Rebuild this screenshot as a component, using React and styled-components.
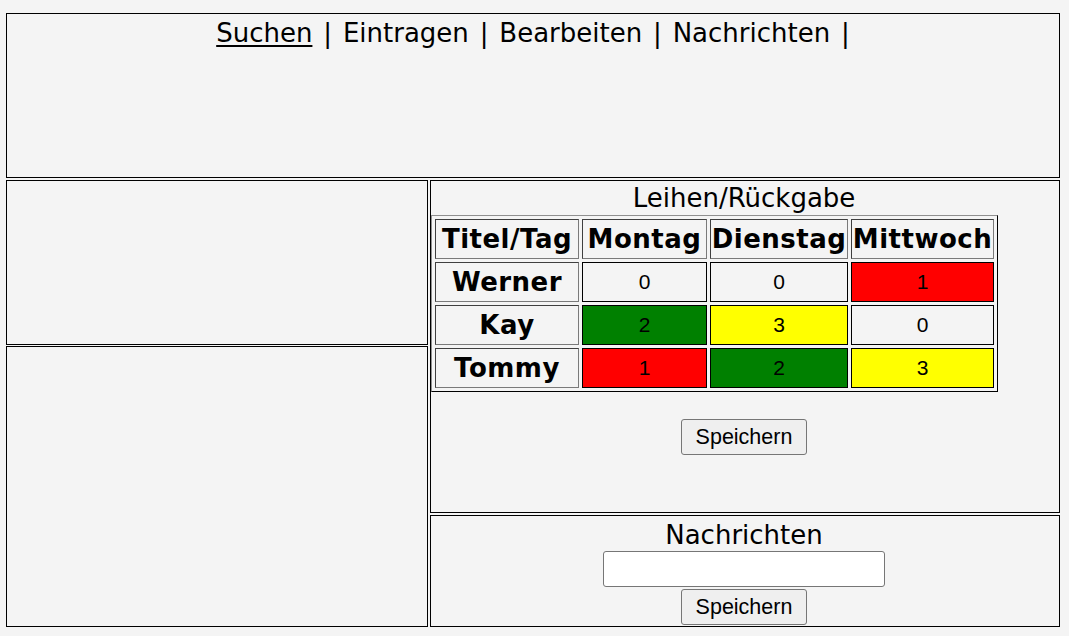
import React from 'react'
import styled, { createGlobalStyle } from 'styled-components'

const GlobalStyle = createGlobalStyle`
  body {
    margin: 0;
    background: #f4f4f4;
    font-family: "DejaVu Sans", Verdana, sans-serif;
    color: #000;
  }
`;

const Page = styled.div`
  padding: 13px 0 0 6px;
  width: 1054px;
`;

const Cell = styled.div`
  box-sizing: border-box;
  border: 1px solid #000;
  height: ${(props) => props.h}px;
  text-align: center;
  padding: ${(props) => props.pad || '0'};
`;

const Nav = styled.div`
  font-size: 26px;
  line-height: 30px;
  word-spacing: 2.6px;
`;

const NavLink = styled.a`
  color: #000;
  text-decoration: underline;
  text-underline-offset: 3px;
`;

const Columns = styled.div`
  display: flex;
  gap: 2px;
  margin-top: 2px;
`;

const Column = styled.div`
  width: ${(props) => props.w}px;
  display: flex;
  flex-direction: column;
  gap: ${(props) => props.gap}px;
`;

const Heading = styled.div`
  font-size: 26px;
  line-height: 30px;
  height: ${(props) => props.h || 31}px;
`;

const Grid = styled.table`
  border: 1px outset #8a8a8a;
  border-color: #8f8f8f #4a4a4a #4a4a4a #8f8f8f;
  border-spacing: 3px;
  padding: 0;
  text-align: center;
`;

const Th = styled.th`
  box-sizing: border-box;
  width: ${(props) => props.w}px;
  height: ${(props) => props.h || 40}px;
  padding: 0;
  border: 1px solid;
  border-color: #3f3f3f #7a7a7a #7a7a7a #3f3f3f;
  font-size: 26px;
  font-weight: bold;
  letter-spacing: 0.5px;
`;

const Td = styled.td`
  box-sizing: border-box;
  height: 40px;
  padding: 0;
  border: 1px solid #000;
  background: ${(props) => props.bg || 'transparent'};
  font-family: "Liberation Sans", Arial, sans-serif;
  font-size: 21px;
`;

const Button = styled.button`
  box-sizing: border-box;
  width: 126px;
  height: 36px;
  padding: 0;
  background: #efefef;
  border: 1px solid #767676;
  border-radius: 3px;
  font-family: "Liberation Sans", Arial, sans-serif;
  font-size: 21.5px;
  color: #000;
`;

const Stack = styled.div`
  display: flex;
  flex-direction: column;
  align-items: center;
  gap: 2px;
  margin-top: ${(props) => props.top || 0}px;
`;

const Input = styled.input`
  box-sizing: border-box;
  width: 282px;
  height: 36px;
  background: #fff;
  border: 1px solid #767676;
  border-radius: 3px;
`;

const colors = { 0: null, 1: '#ff0000', 2: '#008000', 3: '#ffff00' };

const rows = [
  ['Werner', [0, 0, 1]],
  ['Kay', [2, 3, 0]],
  ['Tommy', [1, 2, 3]],
];

const days = [
  ['Montag', 125],
  ['Dienstag', 138],
  ['Mittwoch', 143],
];

const App = () => {
  return (
    <Page>
      <GlobalStyle />
      <Cell h={165} pad="4px 0 0">
        <Nav>
          <NavLink href="#">Suchen</NavLink> | Eintragen | Bearbeiten | Nachrichten |
        </Nav>
      </Cell>
      <Columns>
        <Column w={422} gap={1}>
          <Cell h={165} />
          <Cell h={281} />
        </Column>
        <Column w={630} gap={2}>
          <Cell h={333} pad="2px 2px 0 0">
            <Heading h={32}>Leihen/Rückgabe</Heading>
            <Grid>
              <thead>
                <tr>
                  <Th w={144}>Titel/Tag</Th>
                  {days.map(([d, w]) => (
                    <Th key={d} w={w}>{d}</Th>
                  ))}
                </tr>
              </thead>
              <tbody>
                {rows.map(([name, vals]) => (
                  <tr key={name}>
                    <Th w={144}>{name}</Th>
                    {vals.map((v, i) => (
                      <Td key={i} bg={colors[v]}>{v}</Td>
                    ))}
                  </tr>
                ))}
              </tbody>
            </Grid>
            <Stack top={27}>
              <Button>Speichern</Button>
            </Stack>
          </Cell>
          <Cell h={112} pad="4px 2px 0 0">
            <Heading>Nachrichten</Heading>
            <Stack>
              <Input type="text" />
              <Button>Speichern</Button>
            </Stack>
          </Cell>
        </Column>
      </Columns>
    </Page>
  )
}

export default App
